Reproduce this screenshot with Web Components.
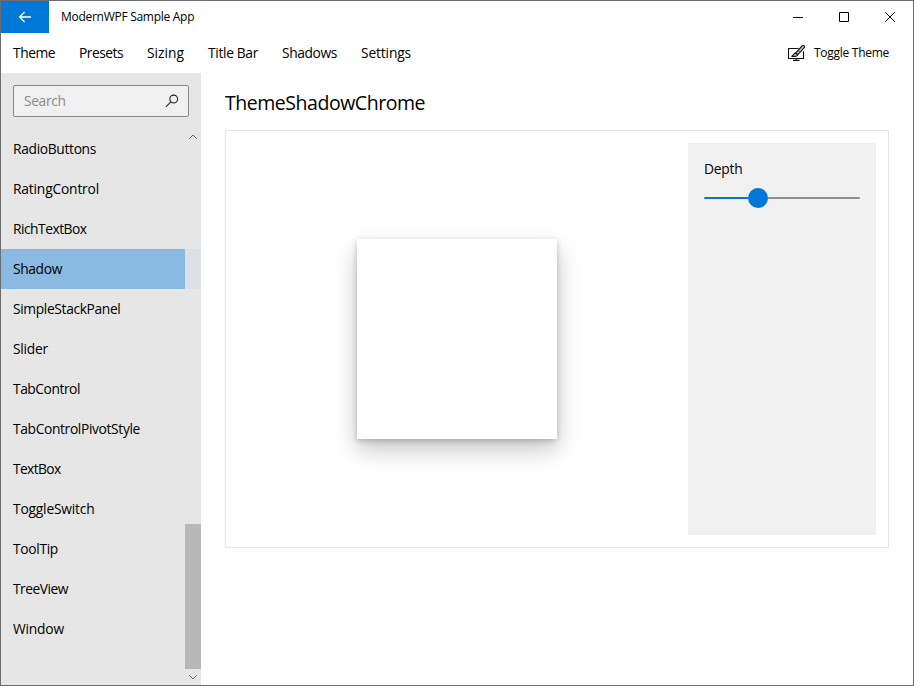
<!DOCTYPE html>
<html lang="en">
<head>
<meta charset="utf-8">
<title>ModernWPF Sample App</title>
<style>
html,body{margin:0;height:100%;overflow:hidden;background:#fff}
body{font-family:"Open Sans","Noto Sans",sans-serif;font-size:13.8px;color:#000}
</style>
</head>
<body>
<app-window></app-window>
<script>
const define = (name, html, setup) => customElements.define(name, class extends HTMLElement {
  connectedCallback() {
    if (this.shadowRoot) return;
    const t = document.createElement('template');
    t.innerHTML = html;
    this.attachShadow({ mode: 'open' }).append(t.content.cloneNode(true));
    if (setup) setup.call(this, this.shadowRoot);
  }
});

/* Text label whose tracking is adjusted so that it occupies the "w" width. */
define('fit-label', `<style>:host{display:block;white-space:pre;line-height:20px}span{display:inline-block}</style><span></span>`, function (root) {
  const s = root.querySelector('span');
  s.textContent = this.getAttribute('text');
  const natural = s.getBoundingClientRect().width;
  s.style.letterSpacing = ((+this.getAttribute('w') - natural) / s.textContent.length).toFixed(3) + 'px';
});

define('title-bar', `<style>
:host{display:flex;height:32px;align-items:stretch}
.back{width:48px;background:#0078d7;display:grid;place-items:center}
fit-label{font-size:12px;flex:1;padding-left:12px;align-self:center}
.b{width:46px;display:grid;place-items:center}
svg{display:block;fill:none}
</style>
<div class="back"><svg width="14" height="12" viewBox="0 0 14 12" stroke="#fff" stroke-width="1.3"><path d="M13 6H1.8M6.6 1L1.6 6L6.6 11"/></svg></div>
<fit-label text="ModernWPF Sample App" w="133.2"></fit-label>
<div class="b"><svg width="10" height="10" stroke="#000"><path d="M0 5.5H10"/></svg></div>
<div class="b"><svg width="10" height="10" stroke="#000"><path d="M.5 .5H9.5V9.5H.5Z"/></svg></div>
<div class="b"><svg width="10" height="10" stroke="#000"><path d="M.2 .2L9.8 9.8M9.8 .2L.2 9.8"/></svg></div>`);

define('menu-bar', `<style>
:host{display:flex;height:40px;align-items:center;padding:0 24px 0 12px}
nav{display:flex;gap:24px;flex:1}
.t{display:flex;align-items:center;gap:8px;font-size:12px}
svg{display:block}
</style>
<nav><fit-label text="Theme" w="42"></fit-label><fit-label text="Presets" w="44"></fit-label><fit-label text="Sizing" w="37"></fit-label><fit-label text="Title Bar" w="50"></fit-label><fit-label text="Shadows" w="55"></fit-label><fit-label text="Settings" w="50"></fit-label></nav>
<div class="t"><svg width="18" height="16" viewBox="0 0 18 16" fill="none" stroke="#111" stroke-width="1.1">
<path d="M10.6 3.5H.5V13.5H15.5V6.2M5 15.4H11.5M8.2 13.4V15.4"/>
<path d="M7.6 8.1L14.3 .8Q15.6 .1 16.3 1Q16.8 1.9 16 2.8L9.7 9.8Z" fill="#ccc"/>
<path d="M9.7 9.8Q9 12 3.5 11.4Q5.1 10.8 5.5 9.4Q6.3 8 7.6 8.1Q9.3 8.3 9.7 9.8Z" fill="#aaa"/>
<path d="M10.1 5.6L12 7.3" stroke-width=".8"/></svg>
<fit-label text="Toggle Theme" w="75"></fit-label></div>`);

define('search-box', `<style>
:host{display:flex;box-sizing:border-box;height:32px;border:1px solid #898989;border-radius:2px;background:#f0f0f0;align-items:center;justify-content:space-between;padding:0 9px 0 10px;color:#8c8c8c}
svg{display:block}
</style><fit-label text="Search" w="41.5"></fit-label>
<svg width="14" height="14" viewBox="0 0 14 14" fill="none" stroke="#222" stroke-width="1.05"><circle cx="8.7" cy="5" r="3.9"/><path d="M5.9 7.8L.9 12.8"/></svg>`);

define('nav-item', `<style>
:host{display:flex;height:40px}
.m{width:172px;padding-left:12px;display:flex;align-items:center}
:host([selected]){background:#dde0e7}
:host([selected]) .m{background:#8ab9e1}
</style><div class="m"><slot></slot></div>`);

define('scroll-bar', `<style>
:host{display:flex;flex-direction:column;width:16px}
.a{height:16px;display:grid;place-items:center}
.track{flex:1;display:flex;align-items:flex-end}
.thumb{width:16px;height:145px;background:#b8b8b8}
svg{display:block;fill:none;stroke:#6a6a6a}
</style><div class="a"><svg width="8" height="6"><path d="M.2 4.8L4 1L7.8 4.8"/></svg></div><div class="track"><div class="thumb"></div></div><div class="a"><svg width="8" height="6"><path d="M.2 1.2L4 5L7.8 1.2"/></svg></div>`);

define('side-bar', `<style>
:host{display:flex;flex-direction:column;width:200px;background:#e6e6e6}
search-box{margin:12px}
.list{flex:1;display:grid;grid-template-columns:184px 16px;min-height:0}
.items{grid-area:1/1/2/3}
scroll-bar{grid-area:1/2}
</style><search-box></search-box><div class="list"><div class="items"></div><scroll-bar></scroll-bar></div>`, function (root) {
  const items = [['RadioButtons', 83], ['RatingControl', 86], ['RichTextBox', 73.5], ['Shadow', 49], ['SimpleStackPanel', 107.5], ['Slider', 35], ['TabControl', 67], ['TabControlPivotStyle', 127], ['TextBox', 47.5], ['ToggleSwitch', 81.5], ['ToolTip', 45], ['TreeView', 55], ['Window', 51]];
  const list = root.querySelector('.items');
  for (const [text, w] of items) {
    const item = document.createElement('nav-item');
    item.toggleAttribute('selected', text === 'Shadow');
    item.innerHTML = `<fit-label text="${text}" w="${w}"></fit-label>`;
    list.append(item);
  }
});

define('depth-slider', `<style>
:host{display:flex;align-items:center;height:20px}
i{height:2px;display:block}
.f{width:44px;background:#0078d7;border-radius:1px 0 0 1px}.r{flex:1;background:#919191;border-radius:0 1px 1px 0}
b{width:20px;height:20px;border-radius:50%;background:#0078d7}
</style><i class="f"></i><b></b><i class="r"></i>`);

define('control-example', `<style>
:host{display:flex;box-sizing:border-box;height:418px;border:1px solid #e6e6e6;padding:12px;gap:12px}
.stage{flex:1;display:grid;place-items:center}
.card{width:200px;height:200px;background:#fff;box-shadow:0 11px 23px rgba(0,0,0,.22),0 2px 6px rgba(0,0,0,.2)}
.options{width:156px;padding:16px;background:#f1f1f1}
depth-slider{margin-top:9px}
</style><div class="stage"><div class="card"></div></div>
<div class="options"><fit-label text="Depth" w="38.5"></fit-label><depth-slider></depth-slider></div>`);

define('app-window', `<style>
:host{display:flex;flex-direction:column;box-sizing:border-box;width:914px;height:686px;border:1px solid #6d6d6f;background:#fff}
.body{flex:1;display:flex;min-height:0}
main{flex:1;padding:16px 24px 0}
.h{font-size:19.5px;height:41px;display:block;line-height:28px}
.h fit-label{padding-top:4px}
</style><title-bar></title-bar><menu-bar></menu-bar>
<div class="body"><side-bar></side-bar><main><div class="h"><fit-label text="ThemeShadowChrome" w="200"></fit-label></div><control-example></control-example></main></div>`);
</script>
</body>
</html>
